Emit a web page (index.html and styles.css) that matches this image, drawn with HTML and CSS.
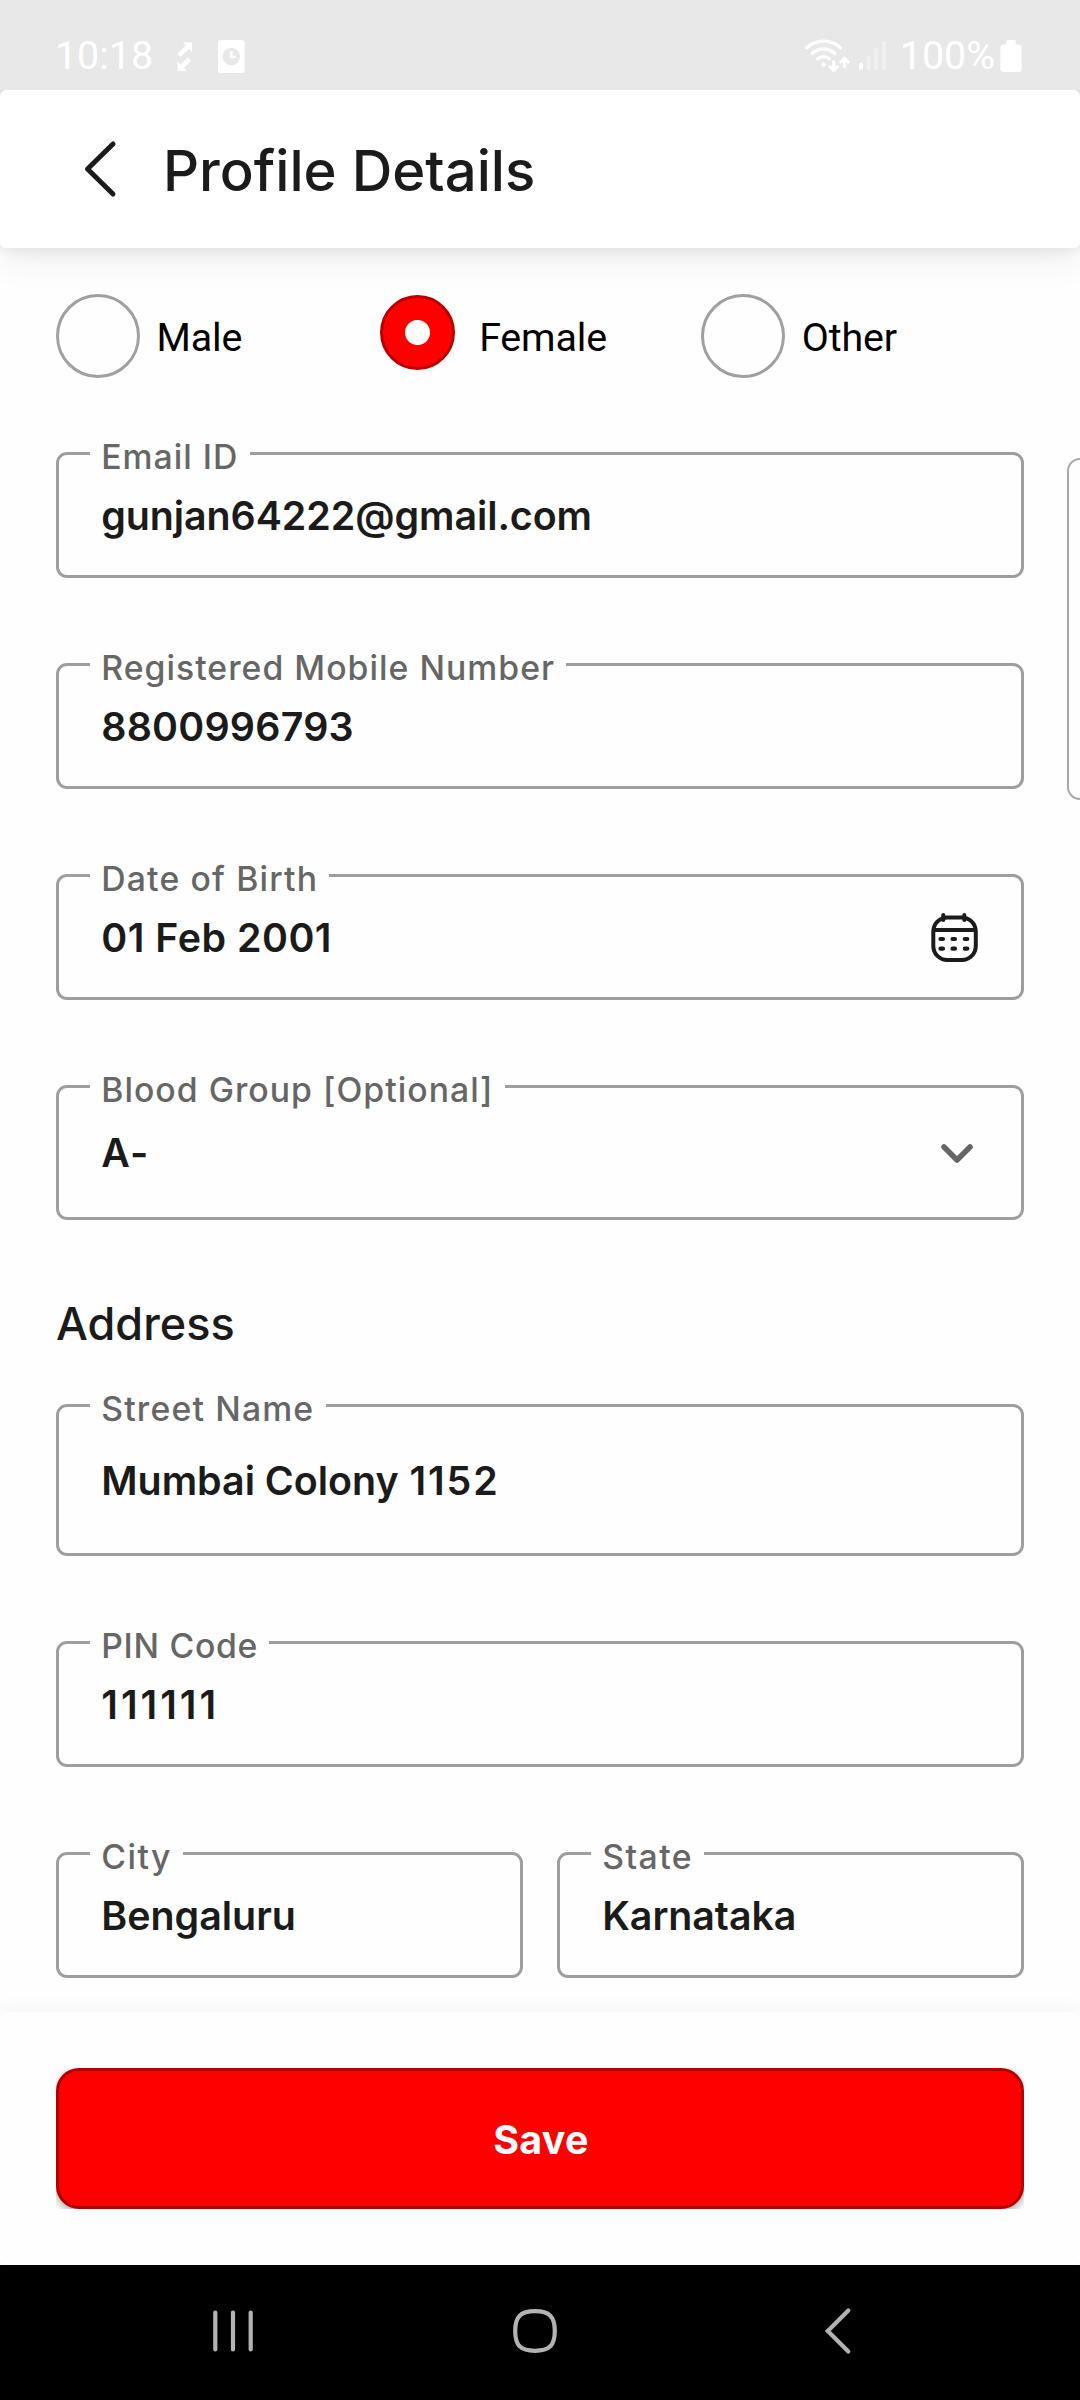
FILE: index.html
```html
<!DOCTYPE html>
<html lang="en">
<head>
<meta charset="utf-8">
<title>Profile Details</title>
<link rel="stylesheet" href="styles.css">
</head>
<body>
<div class="screen">
  <div class="status">
    <span class="status-text">10:18</span>
    <svg class="status-left" width="70" height="34" viewBox="176 40 70 34" fill="#fff">
      <path d="M183 42.500H192V52L188.800 49L180.500 57L177.500 54L185.800 45.500Z"/>
      <path d="M186.500 71H177.500V61.500L180.500 64.500L188 57.500L191.200 60.500L184 67.800Z"/>
      <rect x="218" y="40" width="26.500" height="33" rx="2.500"/>
      <circle cx="231.300" cy="56.500" r="8.700" fill="#e8e8e8"/>
      <path d="M231.300 51V57H235.800" fill="none" stroke="#fff" stroke-width="2.600"/>
    </svg>
    <svg class="status-net" width="84" height="36" viewBox="804 38 84 36" fill="none" stroke="#fff" stroke-width="3.400" stroke-linecap="round">
      <path d="M806.800 47.700A25 25 0 0 1 840.500 47.700M812 53.500A17 17 0 0 1 835 53.500M817.500 58.800A9.500 9.500 0 0 1 829.500 58.800"/>
      <circle cx="823.600" cy="64.500" r="2.200" fill="#fff" stroke="none"/>
      <path d="M833.700 61.500V70M830 66.800L833.700 70.500L837.400 66.800M844.500 67V59M840.700 62L844.500 58.300L848.200 62" stroke-width="3"/>
      <path d="M861 65V68" stroke-width="4"/>
      <path d="M868.500 57.500V68M876.200 50V68M884 43V68" stroke="#f0f0f0" stroke-width="4"/>
    </svg>
    <span class="status-text">100%</span>
    <svg class="status-battery" width="22" height="33" viewBox="0 0 22 33" fill="#fff">
      <rect x="6.300" y="0" width="9.500" height="10" rx="1.500"/>
      <rect x="0.300" y="4.500" width="21.400" height="27.500" rx="3.500"/>
    </svg>
  </div>

  <header class="header">
    <svg class="back" width="34" height="60" viewBox="0 0 34 60" fill="none" stroke="#1b1b1d" stroke-width="5" stroke-linecap="round" stroke-linejoin="round"><path d="M30 5L4.500 30L30 55"/></svg>
    <h1>Profile Details</h1>
  </header>

  <main class="form">
    <div class="genders">
      <label class="gender"><span class="radio"></span><span>Male</span></label>
      <label class="gender"><span class="radio radio-on"></span><span>Female</span></label>
      <label class="gender"><span class="radio"></span><span>Other</span></label>
    </div>

    <div class="field"><span class="caption">Email ID</span><span class="value value-email">gunjan64222@gmail.com</span></div>
    <div class="field"><span class="caption">Registered Mobile Number</span><span class="value value-mobile">8800996793</span></div>
    <div class="field">
      <span class="caption caption-date">Date of Birth</span><span class="value value-date">01 Feb 2001</span>
      <svg class="calendar" width="48" height="52" viewBox="0 0 48 52" fill="none" stroke="#1b1b1d" stroke-width="4" stroke-linecap="round">
        <rect x="2.300" y="5.500" width="42.500" height="42.500" rx="14"/>
        <path d="M2.500 18H44.500" stroke-linecap="butt"/>
        <path d="M12.300 3V8M33.300 3V8"/>
        <path d="M9.500 27H12M21.500 27H24M33.800 27H36.300M9.500 36.700H12M21.500 36.700H24M33.800 36.700H36.300" stroke-width="4.200"/>
      </svg>
    </div>
    <div class="field field-select">
      <span class="caption">Blood Group [Optional]</span><span class="value value-blood">A-</span>
      <svg class="chevron" width="34" height="22" viewBox="0 0 34 22" fill="none" stroke="#666" stroke-width="5.600" stroke-linecap="round" stroke-linejoin="round"><path d="M4 4L17 17L30 4"/></svg>
    </div>

    <h2>Address</h2>
    <div class="field field-street"><span class="caption caption-date">Street Name</span><span class="value">Mumbai Colony <span class="house">1152</span></span></div>
    <div class="field"><span class="caption caption-pin">PIN Code</span><span class="value value-pin">111111</span></div>
    <div class="pair">
      <div class="field"><span class="caption caption-short">City</span><span class="value">Bengaluru</span></div>
      <div class="field"><span class="caption caption-short">State</span><span class="value value-email">Karnataka</span></div>
    </div>
    <div class="edge-panel"></div>
  </main>

  <footer class="footer">
    <div class="save-clip"><button class="save">Save</button></div>
  </footer>

  <nav class="nav">
    <svg width="42" height="46" viewBox="0 0 42 46" stroke="#b3b3b3" stroke-width="4.200" stroke-linecap="round"><path d="M3.300 4.500V41.500M21 4.500V41.500M38.700 4.500V41.500"/></svg>
    <svg width="46" height="46" viewBox="0 0 46 46" fill="none" stroke="#b3b3b3" stroke-width="4.200"><path d="M23 3.200C37.500 3.200 42.800 8.500 42.800 23S37.500 42.800 23 42.800S3.200 37.500 3.200 23S8.500 3.200 23 3.200Z"/></svg>
    <svg width="28" height="48" viewBox="0 0 28 48" fill="none" stroke="#b3b3b3" stroke-width="4.200" stroke-linecap="round" stroke-linejoin="miter"><path d="M24.300 3.500L3.800 24L24.300 44.500"/></svg>
  </nav>
</div>
</body>
</html>
```
FILE: styles.css
```css
* { box-sizing: border-box; }
body { margin: 0; font-family: Inter, "Liberation Sans", sans-serif; color: #1b1b1b; background: #fefefe; }
svg { display: block; flex: none; }

.screen {
  display: flex;
  flex-direction: column;
  width: 1080px;
  height: 2400px;
  overflow: hidden;
  background: #fefefe;
}

/* Status bar */
.status {
  display: flex;
  align-items: flex-start;
  height: 95px;
  margin-bottom: -5px;
  padding: 28px 0 0 55px;
  background: #e8e8e8;
  flex: none;
}
.status-text {
  font: 39.375px/56px Roboto, "Liberation Sans", sans-serif;
  color: #fff;
  white-space: nowrap;
}
.status-left { margin: 12px 0 0 23px; }
.status-net { margin: 10px 12px 0 auto; }
.status-battery { margin: 12px 58px 0 5px; }

/* Header */
.header {
  position: relative;
  z-index: 2;
  display: flex;
  align-items: center;
  height: 158px;
  padding-left: 83px;
  border-radius: 6px;
  background: #fff;
  box-shadow: 0 10px 36px rgba(0, 0, 0, 0.08), 0 2px 14px rgba(0, 0, 0, 0.07);
  clip-path: inset(0 0 -60px 0);
  flex: none;
}
.header h1 { margin: 3px 0 0 46px; font-size: 56.25px; line-height: 68px; font-weight: 500; }

/* Form */
.form {
  position: relative;
  display: flex;
  flex-direction: column;
  flex: 1 1 0;
  min-height: 0;
  padding: 46px 56px 0;
}
.genders { display: grid; grid-template-columns: repeat(3, 1fr); margin-bottom: 74px; }
.gender {
  display: grid;
  grid-template-columns: 100.5px 1fr;
  align-items: start;
  height: 84px;
  font: 39.375px/48px Roboto, "Liberation Sans", sans-serif;
  color: #000;
}
.gender span:last-child { margin-top: 20px; letter-spacing: -0.150px; }
.radio { width: 84px; height: 84px; border: 3px solid #a0a0a0; border-radius: 50%; }
.radio-on {
  width: 75px;
  height: 75px;
  margin: 1px 0 0 1px;
  border: 3px solid #b80000;
  background: radial-gradient(circle, #fff 12px, #f00 13px);
}

.field {
  position: relative;
  flex: none;
  height: 126px;
  margin-bottom: 85px;
  padding: 37px 42px 0 42.250px;
  border: 3px solid #9e9e9e;
  border-radius: 11px;
}
.caption {
  position: absolute;
  top: -18px;
  left: 31px;
  padding: 0 11.250px;
  background: #fefefe;
  color: #666;
  font-size: 33.750px;
  font-weight: 500;
  line-height: 40px;
  letter-spacing: 1.020px;
  white-space: nowrap;
}
.caption-date { letter-spacing: 1.160px; }
.caption-pin { letter-spacing: 0.700px; }
.caption-short { letter-spacing: 1.450px; }
.value { display: block; font-size: 39.375px; font-weight: 600; line-height: 48px; white-space: nowrap; }
.value-email { letter-spacing: -0.070px; }
.value-mobile { letter-spacing: 0.220px; }
.value-date { letter-spacing: 0.500px; }
.value-blood { letter-spacing: 1.400px; }
.value-pin { letter-spacing: 3px; }
.house { margin-left: 1px; letter-spacing: 1.850px; }
.field-select { height: 135px; margin-bottom: 77px; padding-top: 41px; }
.field-street { height: 152px; padding-top: 50px; }
.calendar { position: absolute; top: 35px; right: 42px; }
.chevron { position: absolute; top: 55px; right: 47px; }

h2 { margin: 0 0 53px; font-size: 45px; font-weight: 500; line-height: 54px; }
.pair { display: grid; grid-template-columns: 1fr 1fr; gap: 34px; }
.pair .field { margin-bottom: 0; }

/* Neighbouring panel whose left side shows past the screen edge */
.edge-panel {
  position: absolute;
  top: 210px;
  left: 1067px;
  width: 40px;
  height: 342px;
  border: 2px solid #a8a8a8;
  border-radius: 13px;
}

/* Footer */
.footer {
  position: relative;
  height: 253px;
  padding: 56px;
  border-radius: 6px;
  background: #fefefe;
  box-shadow: 0 0 22px rgba(0, 0, 0, 0.055);
  flex: none;
}
.save-clip { height: 141px; overflow: hidden; }
.save {
  display: block;
  width: 100%;
  height: 141px;
  padding: 2px 0 0 2px;
  border: 3px solid #b20000;
  border-radius: 23px;
  background: #f00;
  box-shadow: 0 3px 8px rgba(0, 0, 0, 0.35);
  color: #fff;
  font: 700 39.375px/48px Inter, "Liberation Sans", sans-serif;
  letter-spacing: 0.300px;
}

/* System navigation */
.nav {
  position: relative;
  display: flex;
  align-items: center;
  height: 135px;
  padding: 0 0 4px 212px;
  background: #000;
  flex: none;
}
.nav svg:nth-child(2) { margin-left: 258px; }
.nav svg:nth-child(3) { margin-left: 266px; }
```
